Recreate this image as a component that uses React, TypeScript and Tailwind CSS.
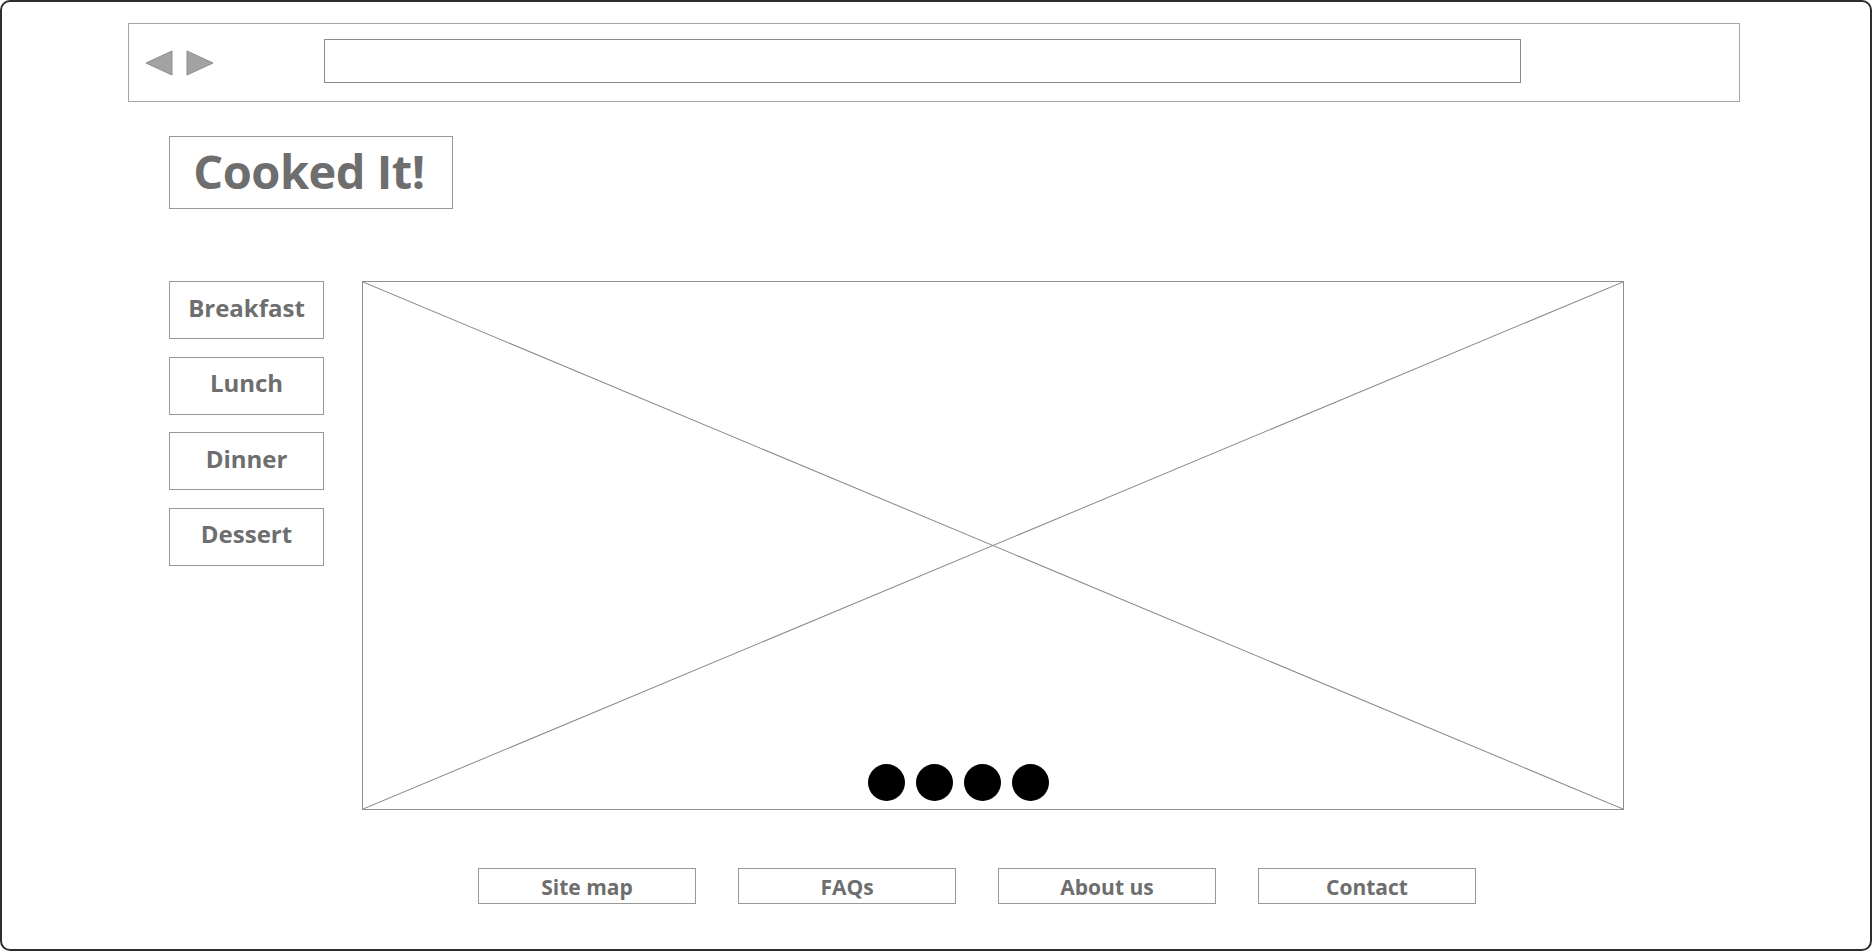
const categories = ["Breakfast", "Lunch", "Dinner", "Dessert"];
const footerLinks = ["Site map", "FAQs", "About us", "Contact"];

function NavArrows() {
  return (
    <div className="flex items-center gap-[13px]">
      <svg width="28" height="26" viewBox="0 0 28 26">
        <polygon points="27,1 27,25 1,13" fill="#a3a3a3" stroke="#8c8c8c" strokeWidth="1" />
      </svg>
      <svg width="28" height="26" viewBox="0 0 28 26">
        <polygon points="1,1 1,25 27,13" fill="#a3a3a3" stroke="#8c8c8c" strokeWidth="1" />
      </svg>
    </div>
  );
}

function Carousel() {
  return (
    <div className="relative w-[1262px] h-[529px] border border-[#8f8f8f]">
      <svg className="absolute inset-0 w-full h-full" viewBox="0 0 100 100" preserveAspectRatio="none">
        <line x1="0" y1="0" x2="100" y2="100" stroke="#8a8a8a" strokeWidth="1" vectorEffect="non-scaling-stroke" />
        <line x1="100" y1="0" x2="0" y2="100" stroke="#8a8a8a" strokeWidth="1" vectorEffect="non-scaling-stroke" />
      </svg>
      <div className="absolute left-[505px] bottom-[8px] flex gap-[11px]">
        {[0, 1, 2, 3].map((i) => (
          <div key={i} className="w-[37px] h-[37px] rounded-full bg-black" />
        ))}
      </div>
    </div>
  );
}

export default function App() {
  return (
    <div
      className="w-full h-screen box-border border-2 border-[#2e2e2e] rounded-[10px] bg-white text-[#6e6e6e] overflow-hidden"
      style={{ fontFamily: '"Open Sans", "Noto Sans", sans-serif' }}
    >
      {/* browser chrome */}
      <div className="mt-[21px] ml-[126px] w-[1612px] h-[79px] border border-[#a6a6a6] flex items-center pl-[16px]">
        <NavArrows />
        <div className="ml-[110px] mb-[3px] w-[1197px] h-[44px] border border-[#8a8a8a]" />
      </div>

      {/* logo */}
      <div className="mt-[34px] ml-[167px] w-[284px] h-[73px] border border-[#999] flex items-center justify-center">
        <span className="text-[47px] font-bold tracking-[-0.5px] leading-none pb-[3px] pr-[4px]">Cooked It!</span>
      </div>

      {/* main */}
      <div className="mt-[72px] ml-[167px] flex gap-[38px]">
        <div className="flex flex-col gap-[17.5px]">
          {categories.map((c) => (
            <div
              key={c}
              className="w-[155px] h-[58px] border border-[#999] flex items-center justify-center pb-[5px] text-[24px] font-bold leading-none"
            >
              {c}
            </div>
          ))}
        </div>
        <Carousel />
      </div>

      {/* footer */}
      <div className="mt-[58px] ml-[476px] flex gap-[42px]">
        {footerLinks.map((l) => (
          <div
            key={l}
            className="w-[218px] h-[36px] border border-[#999] flex items-center justify-center pt-[2px] text-[21px] font-bold leading-none"
          >
            {l}
          </div>
        ))}
      </div>
    </div>
  );
}
